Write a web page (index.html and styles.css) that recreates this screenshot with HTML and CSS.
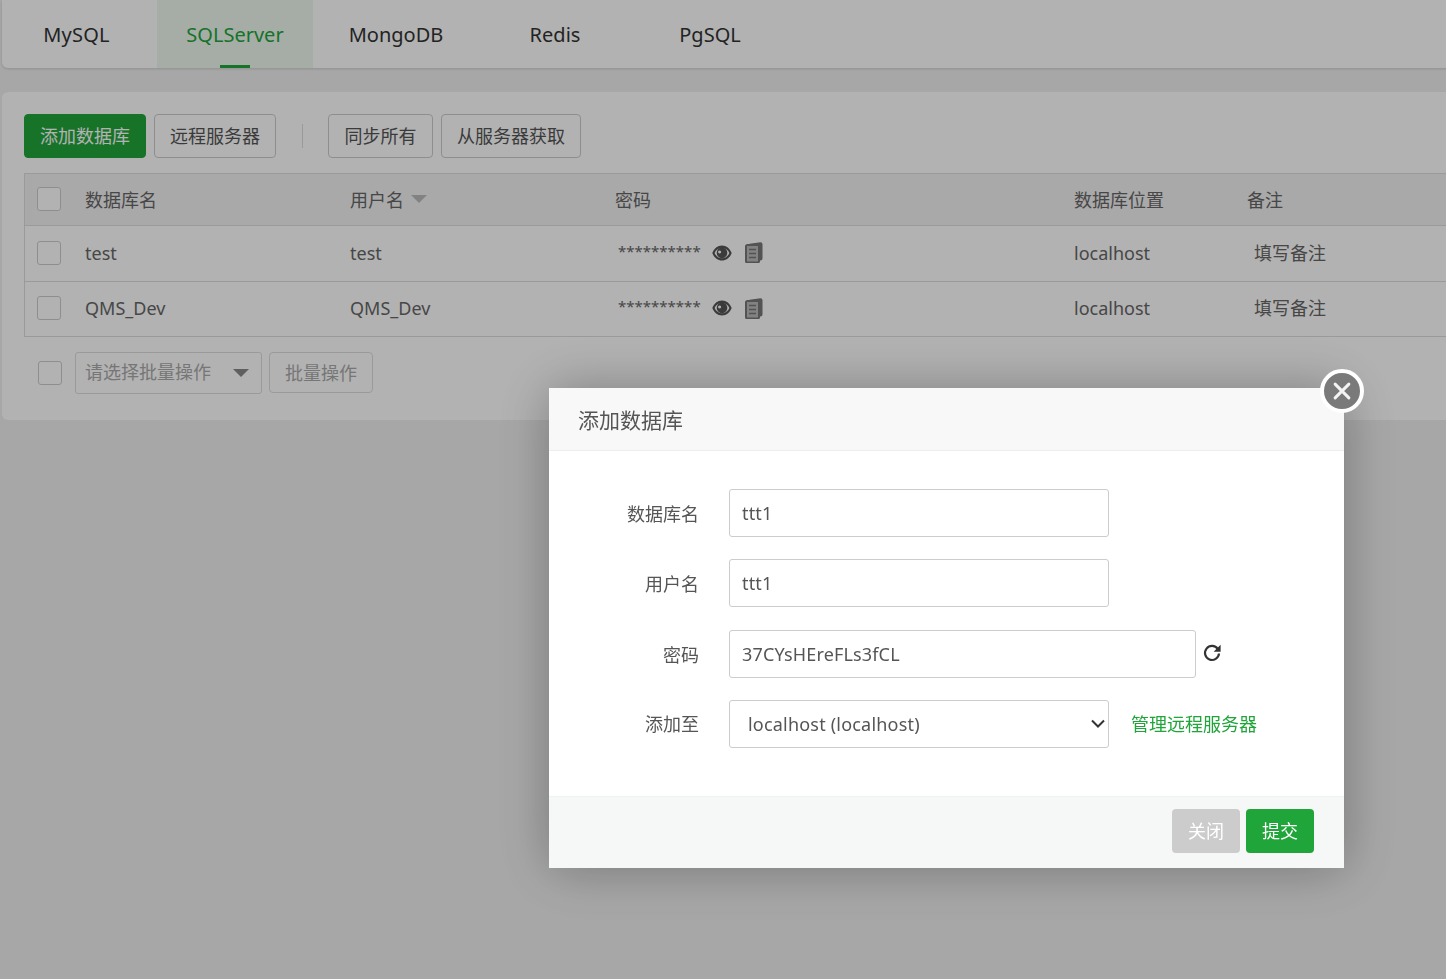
FILE: index.html
```html
<!DOCTYPE html>
<html lang="zh-CN">
<head>
<meta charset="utf-8">
<title>数据库</title>
<link rel="stylesheet" href="styles.css">
</head>
<body>
<main class="page">
  <nav class="tabs">
    <a class="tab first">MySQL</a>
    <a class="tab active">SQLServer</a>
    <a class="tab">MongoDB</a>
    <a class="tab">Redis</a>
    <a class="tab">PgSQL</a>
  </nav>
  <section class="card">
    <div class="toolbar">
      <button class="btn primary">添加数据库</button>
      <button class="btn">远程服务器</button>
      <span class="divider"></span>
      <button class="btn sync">同步所有</button>
      <button class="btn">从服务器获取</button>
    </div>
    <div class="table">
      <div class="row head">
        <span class="check"></span>
        <span class="cell">数据库名</span>
        <span class="cell sort">用户名<i class="caret"></i></span>
        <span class="cell">密码</span>
        <span class="cell">数据库位置</span>
        <span class="cell">备注</span>
      </div>
      <div class="row body-row">
        <span class="check"></span>
        <span class="cell">test</span>
        <span class="cell">test</span>
        <span class="pw"><span class="stars">**********</span>
          <svg class="eye" viewBox="0 0 20 16"><path fill-rule="evenodd" d="M10 .5C5.600 .5 2 3.500 .3 8 2 12.500 5.600 15.500 10 15.500S18 12.500 19.700 8C18 3.500 14.400 .5 10 .5ZM10 3C6.900 3 4 4.800 2.600 8 4 11.200 6.900 13.300 10 13.300S16 11.200 17.400 8C16 4.800 13.100 3 10 3Z"/><path fill-rule="evenodd" d="M10 2.600a5.300 5.300 0 1 0 .01 0ZM7.600 5.600a1.500 1.500 0 1 0 .01 0Z"/></svg>
          <svg class="copy" viewBox="0 0 18 21"><path class="copy-back" d="M4.500 1.700 15.500.3a2 2 0 0 1 2 2v14.200a2 2 0 0 1-2 2H14.500V3.500H4.500Z"/><rect class="copy-page" x="1" y="3" width="13" height="17.500" rx="1.500"/><path class="copy-lines" d="M4 7.500h7M4 11.500h7M4 15.500h7"/></svg>
        </span>
        <span class="cell">localhost</span>
        <span class="note">填写备注</span>
      </div>
      <div class="row body-row">
        <span class="check"></span>
        <span class="cell">QMS_Dev</span>
        <span class="cell">QMS_Dev</span>
        <span class="pw"><span class="stars">**********</span>
          <svg class="eye" viewBox="0 0 20 16"><path fill-rule="evenodd" d="M10 .5C5.600 .5 2 3.500 .3 8 2 12.500 5.600 15.500 10 15.500S18 12.500 19.700 8C18 3.500 14.400 .5 10 .5ZM10 3C6.900 3 4 4.800 2.600 8 4 11.200 6.900 13.300 10 13.300S16 11.200 17.400 8C16 4.800 13.100 3 10 3Z"/><path fill-rule="evenodd" d="M10 2.600a5.300 5.300 0 1 0 .01 0ZM7.600 5.600a1.500 1.500 0 1 0 .01 0Z"/></svg>
          <svg class="copy" viewBox="0 0 18 21"><path class="copy-back" d="M4.500 1.700 15.500.3a2 2 0 0 1 2 2v14.200a2 2 0 0 1-2 2H14.500V3.500H4.500Z"/><rect class="copy-page" x="1" y="3" width="13" height="17.500" rx="1.500"/><path class="copy-lines" d="M4 7.500h7M4 11.500h7M4 15.500h7"/></svg>
        </span>
        <span class="cell">localhost</span>
        <span class="note">填写备注</span>
      </div>
    </div>
    <div class="batch">
      <span class="check"></span>
      <div class="batch-select"><span class="batch-label">请选择批量操作</span><i class="caret dark"></i></div>
      <button class="btn batch-btn">批量操作</button>
    </div>
  </section>
</main>
<div class="overlay"></div>
<div class="modal">
  <header class="modal-head">添加数据库</header>
  <form class="modal-body">
    <div class="field">
      <label>数据库名</label>
      <input class="input" type="text" value="ttt1">
    </div>
    <div class="field">
      <label>用户名</label>
      <input class="input" type="text" value="ttt1">
    </div>
    <div class="field">
      <label>密码</label>
      <input class="input wide" type="text" value="37CYsHEreFLs3fCL">
      <svg class="refresh" viewBox="0 0 18 18"><path d="M14.800 5A7 7 0 1 0 16 9.500" fill="none" stroke="#333" stroke-width="2.200"/><path d="M17.600 .8v7h-7Z" fill="#333"/></svg>
    </div>
    <div class="field">
      <label class="tight">添加至</label>
      <select class="input select"><option>localhost (localhost)</option></select>
      <a class="link">管理远程服务器</a>
    </div>
  </form>
  <footer class="modal-foot">
    <button class="mbtn close-btn">关闭</button>
    <button class="mbtn submit">提交</button>
  </footer>
  <span class="modal-x"><svg viewBox="0 0 16 16"><path d="M2.500 2.500l11 11M13.500 2.500l-11 11" stroke="#f4f4f4" stroke-width="2.400" stroke-linecap="round"/></svg></span>
</div>
</body>
</html>
```
FILE: styles.css
```css
* { box-sizing: border-box; }
html, body { margin: 0; height: 100%; overflow: hidden; }
body {
  background: #f0f0f0;
  color: #666;
  font-family: "Noto Sans", "Noto Sans CJK SC", sans-serif;
  font-size: 18px;
}
.page { padding-left: 2px; width: 1470px; }

.tabs {
  display: grid;
  grid-template-columns: 155px 156px 166px 152px 158px 1fr;
  height: 68px;
  background: #fff;
  border-radius: 0 0 6px 6px;
  box-shadow: 0 1px 3px rgba(0,0,0,.15);
}
.tab {
  display: flex;
  align-items: center;
  justify-content: center;
  color: #333;
  font-size: 20px;
  position: relative;
}
.tab.first { padding-right: 6px; letter-spacing: .2px; }
.tab.active { color: #20a53a; background: rgba(32,165,58,.08); }
.tab.active::after {
  content: "";
  position: absolute;
  left: 63px;
  bottom: 0;
  width: 30px;
  height: 3px;
  background: #20a53a;
}

.card {
  margin-top: 24px;
  height: 328px;
  background: #fff;
  border-radius: 6px;
  padding: 22px 0 0 22px;
}
.toolbar { display: flex; align-items: center; gap: 8px; height: 44px; }
.btn {
  height: 44px;
  padding: 0 15px 2px;
  background: #fff;
  border: 1px solid #ccc;
  border-radius: 4px;
  color: #555;
  font: inherit;
}
.btn.primary { background: #20a53a; border-color: #20a53a; color: #fff; }
.btn.sync { width: 105px; }
.divider { width: 1px; height: 24px; background: #ddd; margin: 0 17px 0 18px; }

.table { margin-top: 15px; border: 1px solid #ddd; border-right: 0; }
.row {
  display: grid;
  grid-template-columns: 60px 265px 265px 459px 173px 1fr;
  align-items: center;
}
.row.head { height: 51px; background: #f2f2f2; color: #666; }
.body-row { height: 56px; border-top: 1px solid #ddd; color: #666; }
.body-row:last-child { height: 55px; }
.cell { padding-bottom: 2px; }
.check {
  display: block;
  width: 24px;
  height: 24px;
  margin-left: 12px;
  border: 1px solid #ccc;
  border-radius: 3px;
  background: #fff;
}
.row .check { margin-bottom: 2px; }
.sort { display: flex; align-items: center; gap: 7px; }
.caret {
  display: block;
  width: 0;
  height: 0;
  border: 8px solid transparent;
  border-top-color: #bbb;
  border-bottom: 0;
}
.caret.dark { border-top-color: #888; margin-left: 22px; }
.pw { display: flex; align-items: center; padding-left: 3px; }
.stars { font-size: 15px; width: 94px; position: relative; top: -3px; }
.eye { width: 20px; height: 16px; fill: #555; position: relative; top: -1px; }
.copy { width: 18px; height: 21px; margin-left: 13px; position: relative; top: -1px; }
.copy-back { fill: #777; }
.copy-page { fill: #bbb; stroke: #777; stroke-width: 2; }
.copy-lines { fill: none; stroke: #777; stroke-width: 1.600; }
.note { padding: 0 0 4px 7px; }

.batch { display: flex; align-items: center; height: 42px; margin-top: 15px; }
.batch .check { margin-left: 14px; margin-right: 13px; }
.batch-select {
  display: flex;
  align-items: center;
  width: 187px;
  height: 42px;
  padding-left: 9px;
  border: 1px solid #ddd;
  border-radius: 3px;
  color: #aaa;
}
.batch-label { padding-bottom: 4px; }
.batch-btn {
  height: 41px;
  margin: 0 0 1px 7px;
  color: #aaa;
  border-color: #ddd;
}

.overlay { position: fixed; inset: 0; background: rgba(0,0,0,.3); }
.modal {
  position: fixed;
  left: 549px;
  top: 388px;
  width: 795px;
  height: 480px;
  display: flex;
  flex-direction: column;
  background: #fff;
  box-shadow: 1px 1px 50px rgba(0,0,0,.3);
  color: #555;
}
.modal-head {
  height: 63px;
  padding-left: 29px;
  line-height: 65px;
  font-size: 21px;
  background: #f8f8f8;
  border-bottom: 1px solid #eee;
  color: #555;
}
.modal-body { flex: 1; padding-top: 38px; display: flex; flex-direction: column; gap: 22.300px; }
.field { display: flex; align-items: center; height: 48px; }
.field label { width: 150px; text-align: right; margin-right: 30px; }
.field label.tight { padding-bottom: 2px; }
.input {
  width: 380px;
  height: 48px;
  padding: 0 12px;
  border: 1px solid #ccc;
  border-radius: 3px;
  background: #fff;
  color: #555;
  font: inherit;
  letter-spacing: .15px;
  outline: none;
}
.input.wide { width: 467px; }
.select {
  padding: 0 18px;
  letter-spacing: .2px;
  appearance: none;
  background: #fff url("data:image/svg+xml,%3Csvg xmlns='http://www.w3.org/2000/svg' width='14' height='9' viewBox='0 0 14 9'%3E%3Cpath d='M1 1.500l6 6 6-6' fill='none' stroke='%23333' stroke-width='2'/%3E%3C/svg%3E") no-repeat right 3px center;
}
.refresh { width: 18px; height: 18px; margin-left: 7px; margin-top: -2px; }
.link { color: #20a53a; margin-left: 22px; padding-bottom: 2px; }
.modal-foot {
  height: 72px;
  background: #f6f8f8;
  border-top: 1px solid #f0f2f2;
  display: flex;
  justify-content: flex-end;
  align-items: center;
  gap: 6px;
  padding: 0 30px 4px 0;
}
.mbtn {
  width: 68px;
  height: 44px;
  padding: 0 0 2px;
  border: 0;
  border-radius: 4px;
  color: #fff;
  font: inherit;
}
.close-btn { background: #ccc; }
.submit { background: #20a53a; }
.modal-x {
  position: absolute;
  right: -20px;
  top: -19px;
  width: 44px;
  height: 44px;
  display: flex;
  align-items: center;
  justify-content: center;
  background: #7a7a7a;
  border: 4px solid #fff;
  border-radius: 50%;
}
.modal-x svg { width: 20px; height: 20px; }
```
